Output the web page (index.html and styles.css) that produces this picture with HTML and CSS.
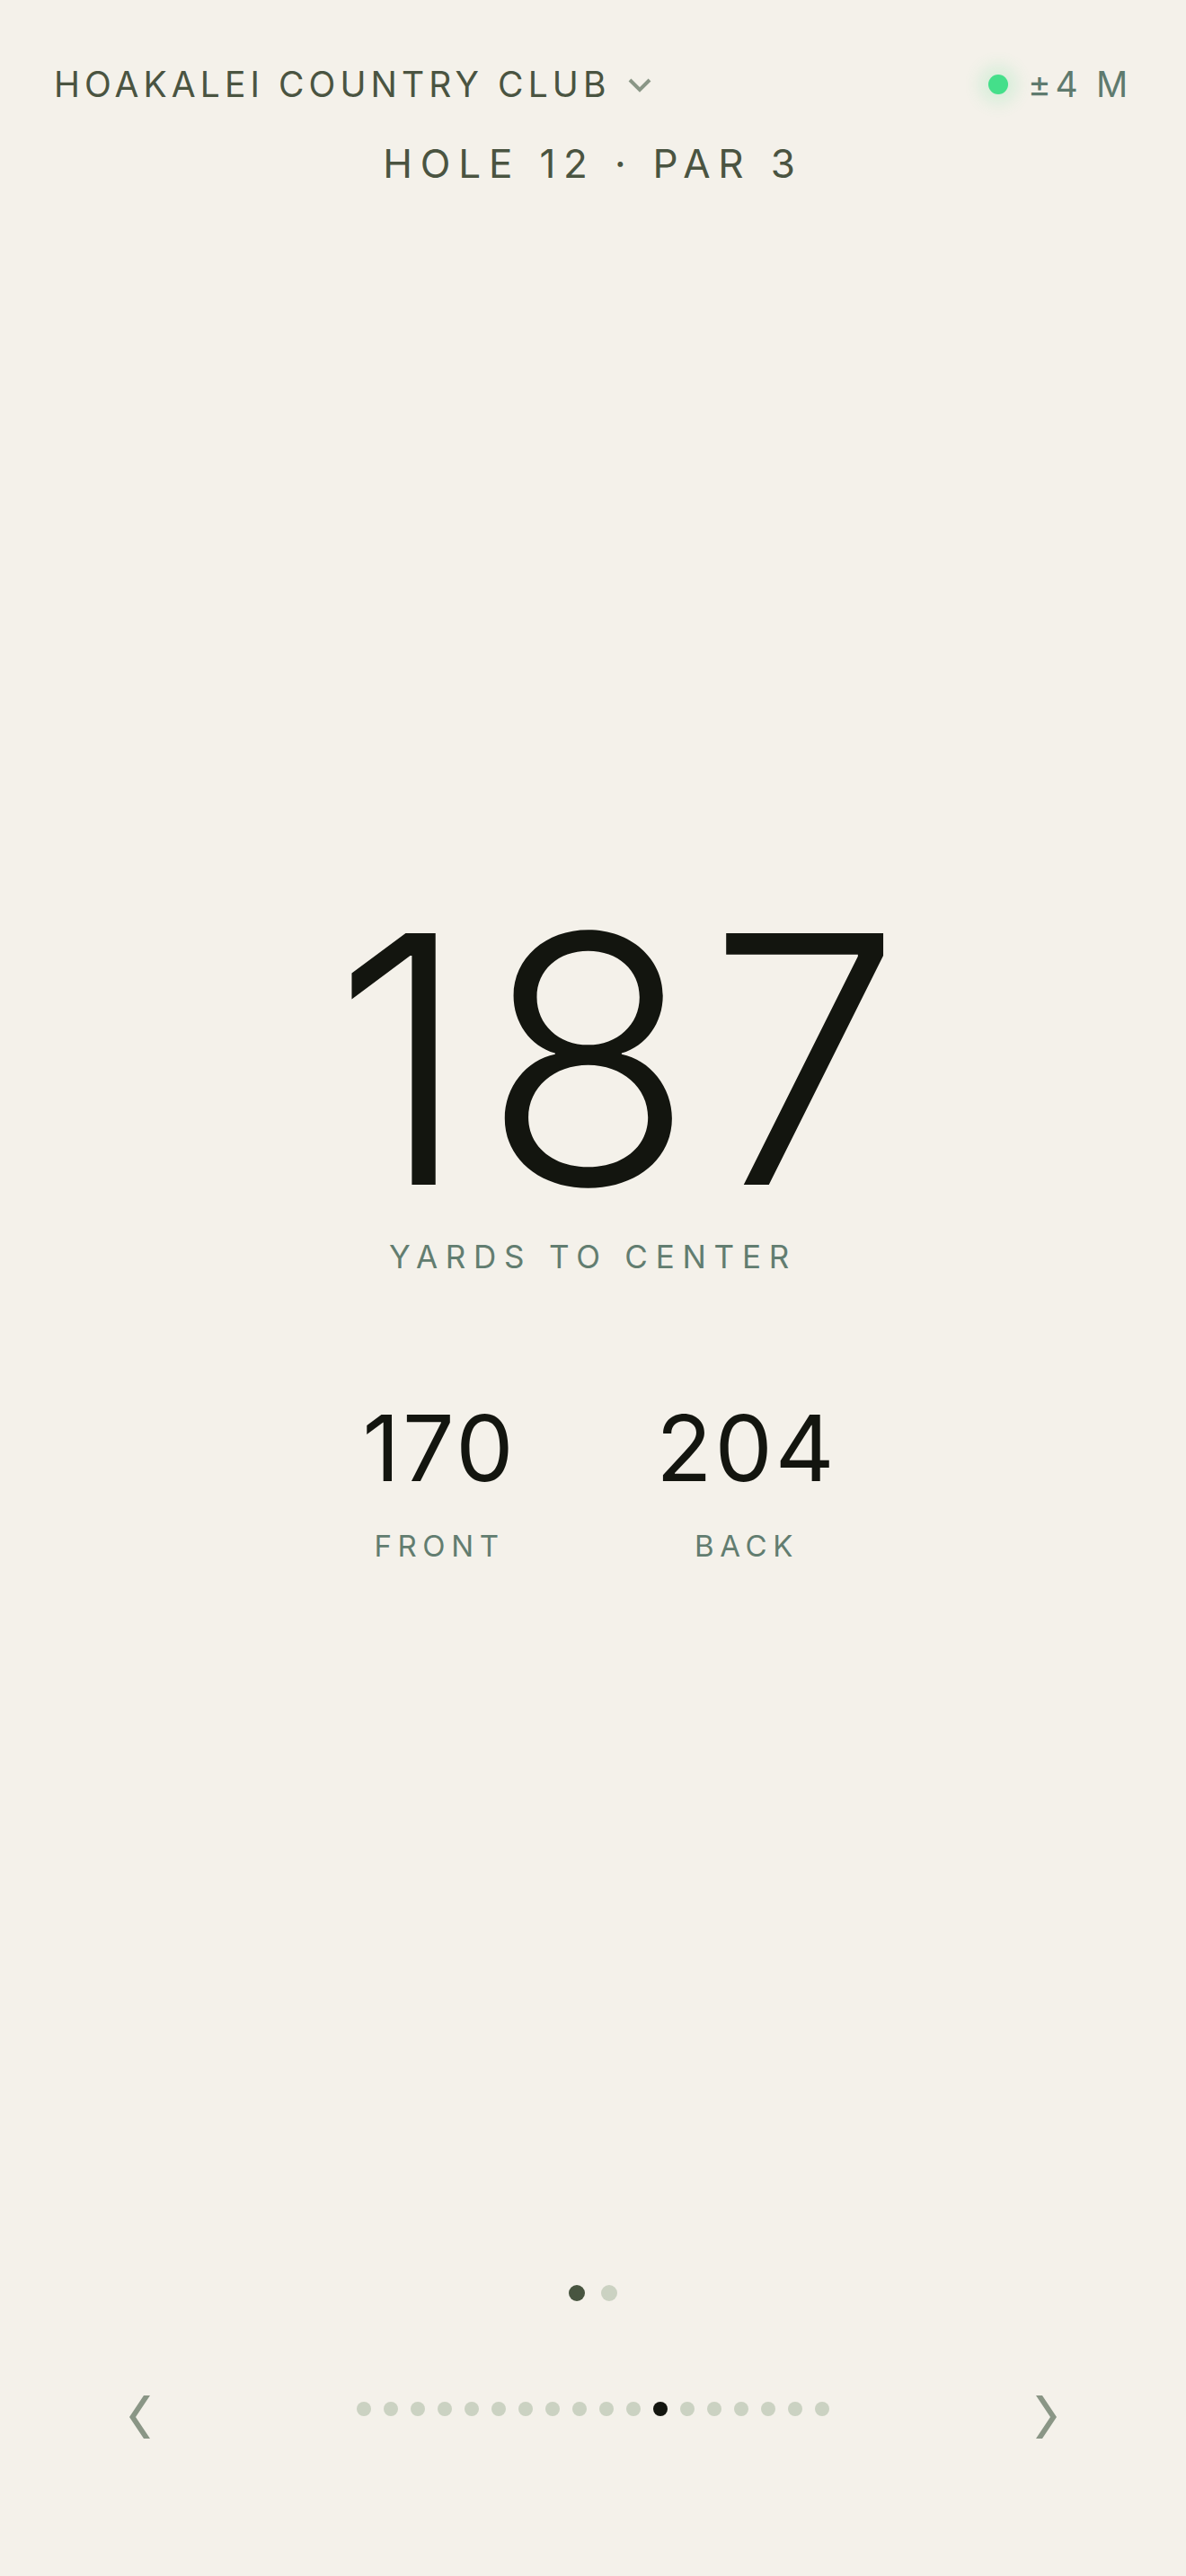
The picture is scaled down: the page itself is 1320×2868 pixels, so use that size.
FILE: index.html
```html
<!DOCTYPE html>
<html lang="en">
<head>
  <meta charset="UTF-8">
  <meta name="viewport" content="width=device-width, initial-scale=1.0">
  <title>Hole 12 · Par 3</title>
  <link rel="stylesheet" href="styles.css">
</head>
<body>
  <div class="app">
    <!-- Course picker and GPS accuracy -->
    <header class="topbar">
      <button class="course">
        <span>HOAKALEI COUNTRY CLUB</span>
        <svg class="caret" viewBox="0 0 26 16" width="26" height="16">
          <polyline points="2,2 13,13 24,2" fill="none" stroke="currentColor" stroke-width="4"/>
        </svg>
      </button>
      <div class="gps">
        <span class="gps-dot"></span>
        <span>±4 M</span>
      </div>
    </header>
    <div class="hole">HOLE 12 · PAR 3</div>

    <main class="distance">
      <div class="center-yards">187</div>
      <div class="label label-center">YARDS TO CENTER</div>
      <div class="edges">
        <div class="edge">
          <div class="edge-yards">170</div>
          <div class="label">FRONT</div>
        </div>
        <div class="edge">
          <div class="edge-yards">204</div>
          <div class="label">BACK</div>
        </div>
      </div>
    </main>

    <div class="pager">
      <span class="pager-dot active"></span>
      <span class="pager-dot"></span>
    </div>

    <!-- Hole navigation -->
    <nav class="holes">
      <button class="arrow">
        <svg viewBox="0 0 26 48" width="26" height="48">
          <polygon points="17,0 24,0 8,24 24,48 17,48 1,24" fill="currentColor"/>
        </svg>
      </button>
      <div class="hole-dots" id="hole-dots"></div>
      <button class="arrow">
        <svg viewBox="0 0 26 48" width="26" height="48">
          <polygon points="2,0 9,0 25,24 9,48 2,48 18,24" fill="currentColor"/>
        </svg>
      </button>
    </nav>
  </div>

  <script>
    // One dot per hole, current hole highlighted
    const current = 12;
    const dots = document.getElementById('hole-dots');
    for (let i = 1; i <= 18; i++) {
      const dot = document.createElement('span');
      dot.className = i === current ? 'hole-dot active' : 'hole-dot';
      dots.appendChild(dot);
    }
  </script>
</body>
</html>
```

FILE: styles.css
```css
body {
  margin: 0;
  background-color: #f4f1ea;
  font-family: Inter, 'Noto Sans', sans-serif;
  color: #4a5441;
}
button {
  font: inherit;
  color: inherit;
  background: none;
  border: none;
  padding: 0;
  cursor: pointer;
}
.app {
  display: flex;
  flex-direction: column;
  height: 2868px;
}
.topbar {
  display: flex;
  justify-content: space-between;
  align-items: center;
  padding: 70px 60px 0 60px;
  height: 48px;
}
.course {
  display: flex;
  align-items: center;
  gap: 20px;
  font-size: 39px;
  line-height: 48px;
  letter-spacing: 0.13em;
  color: #4a5441;
}
.caret {
  color: #8a9686;
  margin-top: 2px;
}
.gps {
  display: flex;
  align-items: center;
  gap: 22px;
  font-size: 39px;
  line-height: 48px;
  letter-spacing: 0.12em;
  color: #5e7a6e;
}
.gps-dot {
  width: 22px;
  height: 22px;
  border-radius: 50%;
  background-color: #44df8a;
  box-shadow: 0 0 18px 10px rgba(68, 223, 138, 0.16);
}
.hole {
  margin-top: 36px;
  text-align: center;
  font-size: 44px;
  line-height: 56px;
  letter-spacing: 0.2em;
  color: #4a5441;
}
.distance {
  flex: 1;
  display: flex;
  flex-direction: column;
  align-items: center;
  padding-top: 815px;
}
/* the big number sits a little right of centre */
.center-yards {
  font-size: 385px;
  line-height: 308px;
  font-weight: 300;
  letter-spacing: 0.04em;
  padding-left: 69px;
  color: #13150f;
}
.label {
  font-size: 33px;
  line-height: 40px;
  letter-spacing: 0.2em;
  color: #627d70;
}
.label-center {
  margin-top: 44px;
  font-size: 35px;
  line-height: 44px;
  letter-spacing: 0.25em;
}
.edges {
  display: flex;
  gap: 120px;
  margin-top: 140px;
}
.edge {
  width: 222px;
  display: flex;
  flex-direction: column;
  align-items: center;
}
.edge-yards {
  font-size: 102px;
  line-height: 102px;
  letter-spacing: 0.03em;
  color: #13150f;
  margin-bottom: 38px;
}
.pager {
  display: flex;
  justify-content: center;
  gap: 18px;
}
.pager-dot {
  width: 18px;
  height: 18px;
  border-radius: 50%;
  background-color: #cbd2c2;
}
.pager-dot.active {
  background-color: #485540;
}
.holes {
  display: flex;
  justify-content: space-between;
  align-items: center;
  padding: 96px 143px 162px 143px;
  height: 48px;
}
.arrow {
  display: flex;
  margin-top: 18px;
  color: #8a9686;
}
.hole-dots {
  display: flex;
  gap: 14px;
}
.hole-dot {
  width: 16px;
  height: 16px;
  border-radius: 50%;
  background-color: #cbd2c2;
}
.hole-dot.active {
  background-color: #13150f;
}
```
